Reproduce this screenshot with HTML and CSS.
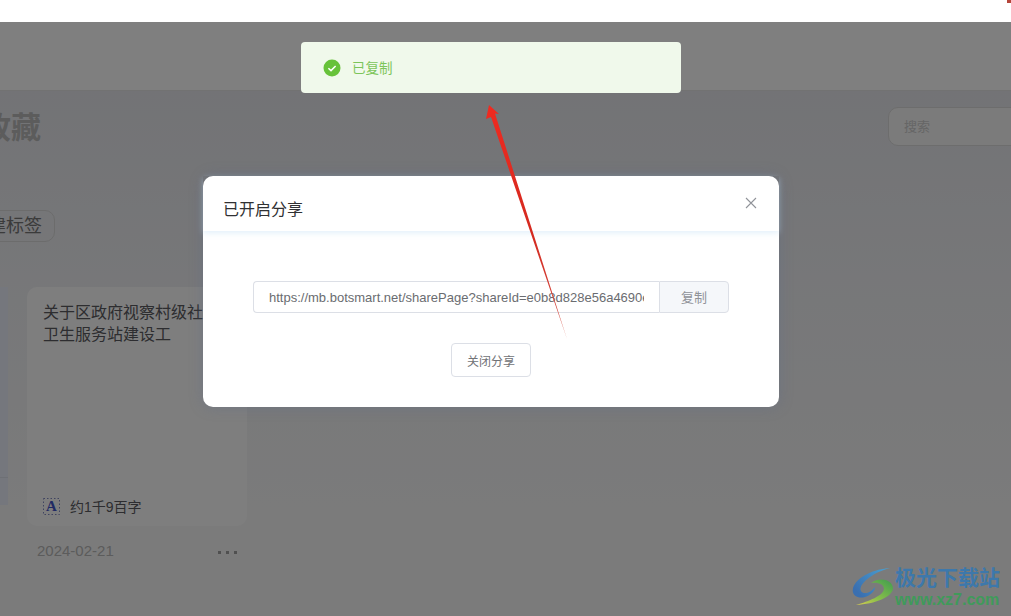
FILE: index.html
```html
<!DOCTYPE html>
<html lang="zh-CN">
<head>
    <meta charset="UTF-8">
    <meta name="viewport" content="width=device-width, initial-scale=1">
    <title>收藏</title>
    <link rel="stylesheet" href="styles.css">
</head>
<body>
    <div class="topbar"></div>
    <div class="header"></div>
    <div class="main">
        <div class="title-row">
            <h1 class="title">收藏</h1>
            <input class="search" type="text" placeholder="搜索">
        </div>
        <div class="tag">新建标签</div>
        <div class="cards">
            <div class="card-stub"></div>
            <div class="card-col">
                <div class="card">
                    <div class="card-text">关于区政府视察村级社区卫生服务站建设工</div>
                    <div class="card-count">
                        <svg class="count-icon" width="17" height="17" viewBox="0 0 17 17">
                            <rect x="0.5" y="0.5" width="16" height="16" fill="none" stroke="#8088c0" stroke-dasharray="1.5 2"/>
                            <text x="8.5" y="13" text-anchor="middle" class="count-letter">A</text>
                        </svg>
                        <span>约1千9百字</span>
                    </div>
                </div>
                <div class="card-foot">
                    <span class="card-date">2024-02-21</span>
                    <span class="card-more"><i></i><i></i><i></i></span>
                </div>
            </div>
        </div>
    </div>

    <div class="overlay"></div>

    <div class="toast">
        <svg width="18" height="18" viewBox="0 0 18 18">
            <circle cx="9" cy="9" r="8.5" fill="#67c23a"/>
            <path d="M5.4 9.2l2.6 2.4 4.6-4.6" fill="none" stroke="#fff" stroke-width="1.5"/>
        </svg>
        <span class="toast-text">已复制</span>
    </div>

    <div class="modal">
        <div class="modal-head">
            <span class="modal-title">已开启分享</span>
            <svg class="modal-close" width="12" height="12" viewBox="0 0 12 12">
                <path d="M1 1l10 10M11 1L1 11" stroke="#909399" stroke-width="1.1" fill="none"/>
            </svg>
        </div>
        <div class="modal-body">
            <div class="link-group">
                <input class="link-input" type="text" readonly value="https://mb.botsmart.net/sharePage?shareId=e0b8d828e56a4690e1f2c3">
                <div class="link-copy">复制</div>
            </div>
            <button class="close-share">关闭分享</button>
        </div>
    </div>

    <svg class="arrow" width="90" height="240" viewBox="0 0 90 240">
        <defs>
            <linearGradient id="arrowFill" x1="0" y1="0" x2="0" y2="1">
                <stop offset="0" stop-color="#f02a20"/>
                <stop offset="0.55" stop-color="#d42a20"/>
                <stop offset="0.88" stop-color="#d4483e"/>
                <stop offset="1" stop-color="#e08a80"/>
            </linearGradient>
        </defs>
        <path d="M5 2 L15 11 L11 10.5 L83 236 L7 14 L2 16 Z" fill="url(#arrowFill)"/>
    </svg>

    <div class="corner-mark"></div>

    <div class="watermark">
        <svg width="44" height="42" viewBox="0 0 44 42">
            <defs>
                <linearGradient id="wmBlue" x1="1" y1="0" x2="0" y2="0.6">
                    <stop offset="0" stop-color="#4aa3d4"/>
                    <stop offset="1" stop-color="#3a6fb0"/>
                </linearGradient>
                <linearGradient id="wmGreen" x1="1" y1="0" x2="0" y2="1">
                    <stop offset="0" stop-color="#3f9c4f"/>
                    <stop offset="0.6" stop-color="#8cc04a"/>
                    <stop offset="1" stop-color="#d8cc50"/>
                </linearGradient>
            </defs>
            <path d="M39 2C24 3 6 10 2 22C0 30 8 33 14 31C20 29 24 25 24 21C20 27 12 29 10 25C7 19 20 7 39 2Z" fill="url(#wmBlue)"/>
            <path d="M20 17C28 11 41 13 42 22C42 31 24 38 5 39C18 35 32 30 33 23C33 18 27 16 20 17Z" fill="url(#wmGreen)"/>
        </svg>
        <div class="wm-text">
            <div class="wm-name">极光下载站</div>
            <div class="wm-url">www.xz7.com</div>
        </div>
    </div>
</body>
</html>
```

FILE: styles.css
```css
body {
    margin: 0;
    height: 616px;
    overflow: hidden;
    position: relative;
    background: #fff;
    font-family: "Liberation Sans", "Noto Sans CJK SC", sans-serif;
    color: #333;
}
.topbar {
    height: 22px;
    background: #fff;
}
.header {
    height: 68px;
    background: #fff;
    border-bottom: 1px solid #e4e4e4;
}
.main {
    height: 525px;
    box-sizing: border-box;
    padding-top: 15px;
    background: linear-gradient(to bottom, #e6e7ec, #eff0f3 40%, #f7f7f7 85%);
}
.title-row {
    display: flex;
    align-items: center;
    justify-content: space-between;
    height: 40px;
}
.title {
    margin: -2px 0 0 -19px;
    font-size: 30px;
    font-weight: bold;
    color: #b8b8b8;
}
.search {
    width: 140px;
    height: 39px;
    margin-right: -17px;
    padding: 0 15px;
    box-sizing: border-box;
    background: #f6f6f6;
    border: 1px solid #dadada;
    border-radius: 10px;
    font-size: 13px;
    font-family: inherit;
}
.search::placeholder {
    color: #ccc;
}
.tag {
    width: 73px;
    height: 30px;
    margin: 64px 0 0 -32px;
    padding-right: 12px;
    line-height: 31px;
    text-align: right;
    white-space: nowrap;
    font-size: 18px;
    color: #777;
    border: 1px solid #d8d8d8;
    border-radius: 10px;
}
.cards {
    display: flex;
    gap: 19px;
    margin-top: 45px;
}
.card-stub {
    width: 8px;
    height: 218px;
    background: linear-gradient(to bottom, #eaeefa 87%, #dde0ea 87%, #dde0ea 87.5%, #eaeefa 87.5%);
}
.card-col {
    width: 220px;
}
.card {
    height: 239px;
    box-sizing: border-box;
    padding: 15px 16px 0;
    display: flex;
    flex-direction: column;
    justify-content: space-between;
    background: #fdfdfd;
    border-radius: 10px;
}
.card-text {
    font-size: 16px;
    line-height: 22px;
    color: #5a5a60;
}
.card-count {
    display: flex;
    align-items: center;
    gap: 10px;
    margin-bottom: 10px;
    font-size: 14px;
    color: #5a5a60;
}
.count-letter {
    font-family: "Liberation Serif", serif;
    font-size: 15px;
    font-weight: bold;
    fill: #3f55c8;
}
.card-foot {
    display: flex;
    align-items: center;
    justify-content: space-between;
    padding: 16px 10px 0 10px;
}
.card-date {
    font-size: 15px;
    color: #b8b8b8;
}
.card-more {
    display: flex;
    gap: 5px;
    padding-top: 4px;
}
.card-more i {
    width: 3px;
    height: 3px;
    background: #a0a0a0;
}
.overlay {
    position: absolute;
    top: 22px;
    left: 0;
    right: 0;
    bottom: 0;
    background: rgba(0, 0, 0, 0.5);
}
.toast {
    position: absolute;
    top: 42px;
    left: 301px;
    width: 380px;
    height: 51px;
    box-sizing: border-box;
    padding-left: 22px;
    display: flex;
    align-items: center;
    gap: 11px;
    background: #f0f9eb;
    border-radius: 4px;
    font-size: 13.5px;
    color: #7cc55a;
}
.toast-text {
    margin-top: -2px;
}
.modal {
    position: absolute;
    top: 176px;
    left: 203px;
    width: 576px;
    height: 231px;
    background: #fff;
    border-radius: 10px;
    box-shadow: 0 0 14px rgba(90, 105, 140, 0.35);
}
.modal-head {
    height: 55px;
    padding: 0 20px;
    display: flex;
    align-items: center;
    justify-content: space-between;
    box-shadow: 0 2px 6px rgba(190, 220, 245, 0.45);
}
.modal-title {
    font-size: 16px;
    color: #303133;
    padding-top: 8px;
}
.modal-close {
    margin: -2px 2px 0 0;
}
.modal-body {
    display: flex;
    flex-direction: column;
    align-items: center;
    padding-top: 50px;
}
.link-group {
    display: flex;
    width: 476px;
    height: 32px;
}
.link-input {
    flex: 1;
    min-width: 0;
    box-sizing: border-box;
    padding: 0 15px;
    border: 1px solid #dcdfe6;
    border-right: none;
    border-radius: 4px 0 0 4px;
    font-size: 13px;
    font-family: inherit;
    color: #6a6c70;
    outline: none;
}
.link-copy {
    width: 70px;
    box-sizing: border-box;
    line-height: 31px;
    text-align: center;
    font-size: 13px;
    color: #909399;
    background: #f5f7fa;
    border: 1px solid #dcdfe6;
    border-radius: 0 4px 4px 0;
}
.close-share {
    width: 80px;
    height: 34px;
    margin-top: 30px;
    padding: 0;
    background: #fff;
    border: 1px solid #dcdfe6;
    border-radius: 4px;
    font-size: 12px;
    font-family: inherit;
    color: #707276;
}
.arrow {
    position: absolute;
    top: 103px;
    left: 484px;
}
.corner-mark {
    position: absolute;
    top: 0;
    right: 0;
    width: 4px;
    height: 3px;
    background: #b5453a;
}
.watermark {
    position: absolute;
    top: 566px;
    left: 851px;
    display: flex;
}
.wm-name {
    font-size: 21px;
    line-height: 24px;
    font-weight: bold;
    color: #3d78ab;
}
.wm-url {
    font-size: 16px;
    line-height: 19px;
    font-weight: bold;
    color: #3f9a5a;
}
```
